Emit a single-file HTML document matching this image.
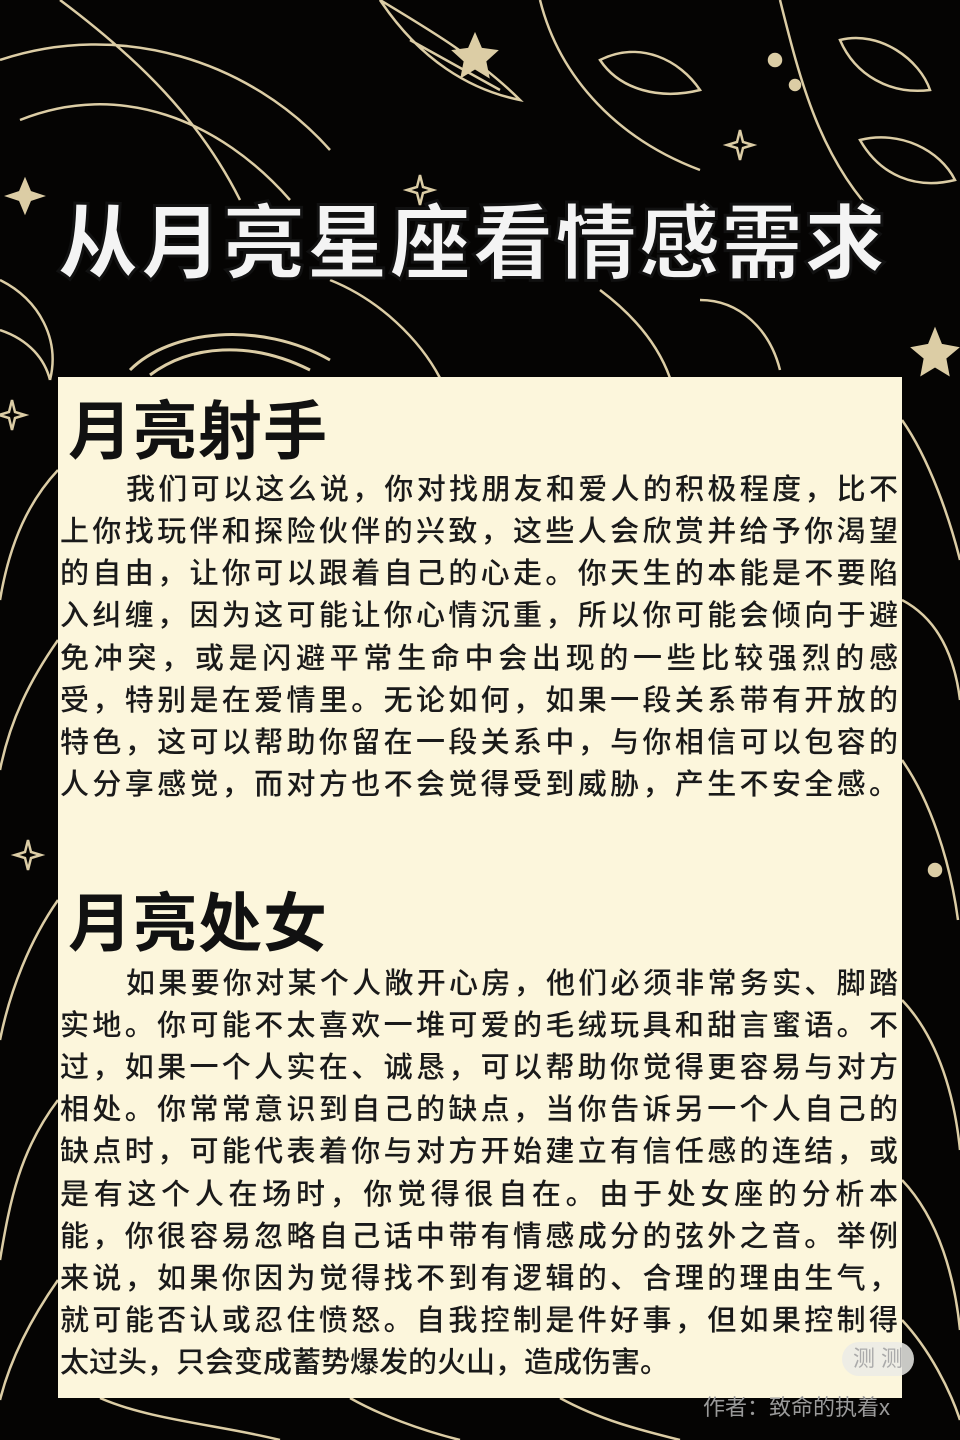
<!DOCTYPE html>
<html><head><meta charset="utf-8"><style>
html,body{margin:0;padding:0;}
body{width:960px;height:1440px;background:#050403;position:relative;overflow:hidden;font-family:"Liberation Sans","Noto Sans CJK SC",sans-serif;}
svg.bg{position:absolute;left:0;top:0;}
.title{position:absolute;left:52px;top:200px;width:840px;text-align:center;font-size:82px;font-weight:900;color:#f4f4f4;letter-spacing:1px;-webkit-text-stroke:3px #111;white-space:nowrap;line-height:90px;}
.panel{position:absolute;left:58px;top:377px;width:844px;height:1021px;background:#fcf6dc;}
.h{position:absolute;left:10px;font-size:64px;font-weight:700;color:#111;line-height:66px;letter-spacing:1px;}
.l{position:absolute;left:2px;width:838px;font-size:29px;font-weight:500;color:#1a1a1a;line-height:34px;text-align:justify;text-align-last:justify;white-space:nowrap;}
.l.i{left:68px;width:772px;}
.l.e{text-align-last:left;}
.badge{position:absolute;left:842px;top:1342px;width:72px;height:34px;border-radius:17px;background:rgba(235,235,230,0.85);color:#aaa;font-size:22px;line-height:34px;text-align:center;}
.auth{position:absolute;left:703px;top:1390px;font-size:22px;color:#9a9a9a;white-space:nowrap;}
</style></head><body>
<svg class="bg" width="960" height="1440" viewBox="0 0 960 1440" fill="none" stroke="#dccda5" stroke-width="2.5">
<path d="M0 60 C120 20 250 60 330 150 M20 120 C120 80 220 120 290 200 M60 0 C140 60 200 120 240 200"/>
<path d="M380 0 C420 60 470 90 520 100 C480 60 430 30 380 0Z M410 40 L500 90"/>
<path d="M540 0 C560 80 620 140 700 170 M600 60 C640 40 680 60 700 90 C660 100 620 90 600 60Z"/>
<path d="M780 0 C800 80 820 160 880 220 M840 40 C880 30 920 60 930 90 C890 95 855 75 840 40Z M860 140 C900 130 940 150 955 180 C915 190 880 175 860 140Z"/>
<path d="M0 280 C40 300 60 340 50 380 M0 330 C30 340 45 360 50 380"/>
<path d="M130 370 C170 330 260 320 330 360 M150 375 C190 345 250 340 310 370" stroke-width="3"/>
<path d="M330 280 C380 300 420 340 440 378 M600 290 C640 320 660 350 670 378 M700 300 C740 300 770 330 780 370"/>
<path d="M902 420 C930 460 950 520 960 560 M902 600 C940 620 955 660 960 700 M902 760 C930 800 950 860 958 920 M902 1000 C940 1040 955 1100 960 1150 M902 1180 C940 1220 955 1280 960 1330"/>
<path d="M58 470 C30 500 10 540 0 600 M58 640 C30 680 10 720 0 770 M58 900 C30 940 10 990 0 1040 M58 1100 C20 1150 10 1200 0 1260 M58 1280 C30 1320 10 1360 0 1400"/>
<path d="M100 1398 C150 1420 220 1425 280 1440 M350 1398 C380 1415 420 1430 460 1440 M560 1398 C600 1420 640 1430 680 1440 M902 1320 C930 1350 950 1390 960 1420"/>
<path d="M25 180 l5 12 12 4 -12 4 -5 12 -5 -12 -12 -4 12 -4Z" fill="#dccda5"/>
<path d="M475 35 l6 14 15 2 -11 10 3 15 -13 -8 -13 8 3 -15 -11 -10 15 -2Z" fill="#dccda5"/>
<path d="M935 330 l6 15 16 3 -12 10 3 16 -13 -8 -13 8 3 -16 -12 -10 16 -3Z" fill="#dccda5"/>
<path d="M12 400 l3 12 10 3 -10 3 -3 12 -3 -12 -10 -3 10 -3Z M28 840 l3 12 10 3 -10 3 -3 12 -3 -12 -10 -3 10 -3Z M740 130 l3 12 10 3 -10 3 -3 12 -3 -12 -10 -3 10 -3Z M420 175 l3 12 10 3 -10 3 -3 12 -3 -12 -10 -3 10 -3Z"/>
<circle cx="775" cy="60" r="6" fill="#dccda5"/><circle cx="795" cy="85" r="5" fill="#dccda5"/><circle cx="935" cy="870" r="6" fill="#dccda5"/>
</svg>
<div class="title">从月亮星座看情感需求</div>
<div class="panel">
<div class="h" style="top:22px">月亮射手</div>
<div class="l i" style="top:96px">我们可以这么说，你对找朋友和爱人的积极程度，比不</div>
<div class="l" style="top:138px">上你找玩伴和探险伙伴的兴致，这些人会欣赏并给予你渴望</div>
<div class="l" style="top:180px">的自由，让你可以跟着自己的心走。你天生的本能是不要陷</div>
<div class="l" style="top:222px">入纠缠，因为这可能让你心情沉重，所以你可能会倾向于避</div>
<div class="l" style="top:265px">免冲突，或是闪避平常生命中会出现的一些比较强烈的感</div>
<div class="l" style="top:307px">受，特别是在爱情里。无论如何，如果一段关系带有开放的</div>
<div class="l" style="top:349px">特色，这可以帮助你留在一段关系中，与你相信可以包容的</div>
<div class="l" style="top:391px">人分享感觉，而对方也不会觉得受到威胁，产生不安全感。</div>
<div class="h" style="top:514px">月亮处女</div>
<div class="l i" style="top:590px">如果要你对某个人敞开心房，他们必须非常务实、脚踏</div>
<div class="l" style="top:632px">实地。你可能不太喜欢一堆可爱的毛绒玩具和甜言蜜语。不</div>
<div class="l" style="top:674px">过，如果一个人实在、诚恳，可以帮助你觉得更容易与对方</div>
<div class="l" style="top:716px">相处。你常常意识到自己的缺点，当你告诉另一个人自己的</div>
<div class="l" style="top:758px">缺点时，可能代表着你与对方开始建立有信任感的连结，或</div>
<div class="l" style="top:801px">是有这个人在场时，你觉得很自在。由于处女座的分析本</div>
<div class="l" style="top:843px">能，你很容易忽略自己话中带有情感成分的弦外之音。举例</div>
<div class="l" style="top:885px">来说，如果你因为觉得找不到有逻辑的、合理的理由生气，</div>
<div class="l" style="top:927px">就可能否认或忍住愤怒。自我控制是件好事，但如果控制得</div>
<div class="l e" style="top:969px">太过头，只会变成蓄势爆发的火山，造成伤害。</div>
</div>
<div class="badge">测 测</div>
<div class="auth">作者：致命的执着x</div>
</body></html>
